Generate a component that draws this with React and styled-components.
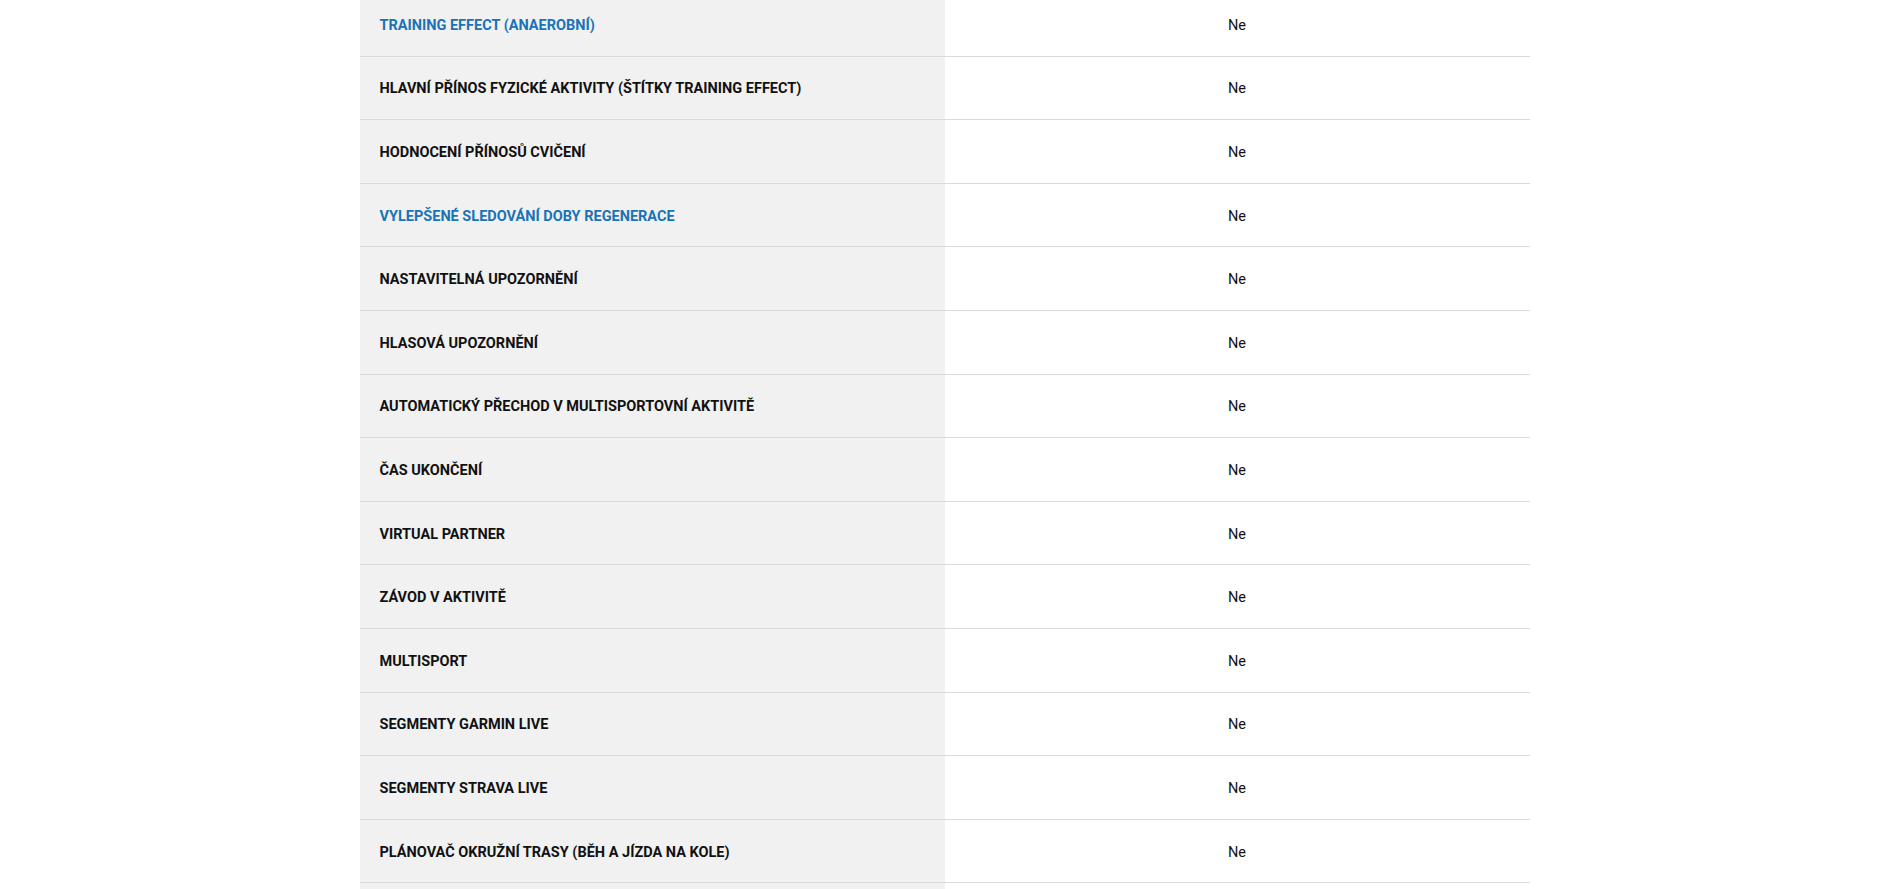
import React from "react";
import styled, { createGlobalStyle } from "styled-components";

const GlobalStyle = createGlobalStyle`
  html, body {
    margin: 0;
    padding: 0;
    background: #fff;
    overflow: hidden;
  }
  body {
    font-family: Roboto, "Liberation Sans", sans-serif;
  }
`;

const Page = styled.div`
  display: flex;
  justify-content: center;
  margin-top: -7px;
`;

const Table = styled.div`
  width: 1170px;
  display: grid;
  grid-template-columns: 585px 585px;
`;

const Label = styled.div`
  background: #f1f1f1;
  height: 63.6px;
  box-sizing: border-box;
  border-bottom: 1px solid #dadada;
  display: flex;
  align-items: center;
  padding: 2px 20px 0;
  font-size: 14.5px;
  font-weight: 700;
  text-transform: uppercase;
  color: ${(p) => (p.$link ? "#1a73b7" : "#111")};
`;

const Value = styled.div`
  height: 63.6px;
  box-sizing: border-box;
  border-bottom: 1px solid #dadada;
  display: flex;
  align-items: center;
  justify-content: center;
  padding-top: 2px;
  font-size: 14.5px;
  color: #111;
`;

const rows = [
  { label: "Training Effect (anaerobní)", link: true },
  { label: "Hlavní přínos fyzické aktivity (štítky Training Effect)" },
  { label: "Hodnocení přínosů cvičení" },
  { label: "Vylepšené sledování doby regenerace", link: true },
  { label: "Nastavitelná upozornění" },
  { label: "Hlasová upozornění" },
  { label: "Automatický přechod v multisportovní aktivitě" },
  { label: "Čas ukončení" },
  { label: "Virtual Partner" },
  { label: "Závod v aktivitě" },
  { label: "Multisport" },
  { label: "Segmenty Garmin Live" },
  { label: "Segmenty Strava Live" },
  { label: "Plánovač okružní trasy (běh a jízda na kole)" },
];

const App = () => (
  <>
    <GlobalStyle />
    <Page>
      <Table>
        {rows.map((r, i) => (
          <React.Fragment key={i}>
            <Label $link={r.link}>{r.label}</Label>
            <Value>Ne</Value>
          </React.Fragment>
        ))}
        <Label />
        <Value />
      </Table>
    </Page>
  </>
);

export default App;
